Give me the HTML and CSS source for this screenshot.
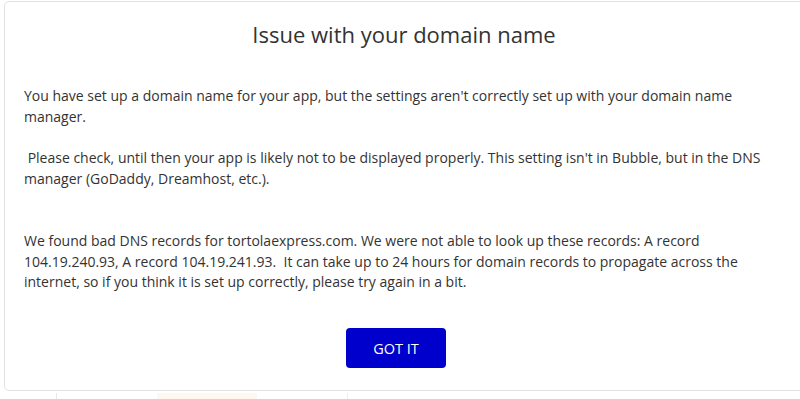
FILE: index.html
```html
<!DOCTYPE html>
<html>
<head>
<meta charset="utf-8">
<link rel="stylesheet" href="styles.css">
</head>
<body>
<div class="page">
  <div class="page-bottom">
    <div class="tab tab-a"></div>
    <div class="tab tab-b"></div>
    <div class="tab tab-c"></div>
  </div>
</div>
<div class="modal">
  <h1 class="title">Issue with your domain name</h1>
  <div class="message">You have set up a domain name for your app, but the settings aren't correctly set up with your domain name manager.<br><br>&nbsp;Please check, until then your app is likely not to be displayed properly. This setting isn't in Bubble, but in the DNS manager (GoDaddy, Dreamhost, etc.).<br><br><br>We found bad DNS records for tortolaexpress.com. We were not able to look up these records: A record 104.19.240.93, A record 104.19.241.93.&nbsp; It can take up to 24 hours for domain records to propagate across the internet, so if you think it is set up correctly, please try again in a bit.</div>
  <div class="actions">
    <button class="btn">GOT IT</button>
  </div>
</div>
</body>
</html>
```
FILE: styles.css
```css
html, body {
  margin: 0;
  padding: 0;
  background: #ffffff;
  width: 800px;
  height: 399px;
  overflow: hidden;
  font-family: "Open Sans", "Noto Sans", sans-serif;
}
.page {
  height: 399px;
  display: flex;
  flex-direction: column;
  justify-content: flex-end;
}
.page-bottom {
  height: 6px;
  display: flex;
}
.tab {
  height: 6px;
}
.tab-a {
  width: 56px;
  border-right: 1px solid #e8e8f0;
}
.tab-b {
  width: 100px;
  margin-left: 100px;
  background: #fff8f0;
}
.tab-c {
  width: 90px;
  border-right: 1px solid #eeeeee;
}
.modal {
  position: absolute;
  left: 4px;
  top: 1px;
  width: 800px;
  height: 390px;
  box-sizing: border-box;
  background: #ffffff;
  border: 1px solid #e2e2e2;
  border-radius: 5px;
  padding: 17px 20px 0 19px;
  display: flex;
  flex-direction: column;
}
.title {
  margin: 0 -20px 0 -19px;
  text-align: center;
  font-weight: 400;
  font-size: 22px;
  line-height: 30px;
  color: #333333;
}
.message {
  margin-top: 37px;
  font-size: 14px;
  line-height: 20.7px;
  color: #333333;
}
.actions {
  margin-top: 35px;
  padding-right: 15px;
  display: flex;
  justify-content: center;
}
.btn {
  width: 100px;
  height: 40px;
  border: none;
  border-radius: 4px;
  background: #0000cc;
  color: #ffffff;
  font-family: "Open Sans", "Noto Sans", sans-serif;
  font-size: 14.5px;
  padding: 0;
}
```
